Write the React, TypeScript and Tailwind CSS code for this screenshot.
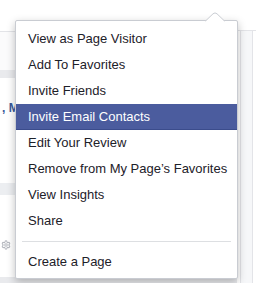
import { Settings } from "lucide-react";

/* ------------------------------------------------------------------ */
/*  Data                                                               */
/* ------------------------------------------------------------------ */

const ITEMS = [
  "View as Page Visitor",
  "Add To Favorites",
  "Invite Friends",
  "Invite Email Contacts",
  "Edit Your Review",
  "Remove from My Page\u2019s Favorites",
  "View Insights",
  "Share",
];

const ACTIVE = "Invite Email Contacts";

/* ------------------------------------------------------------------ */
/*  Component                                                          */
/* ------------------------------------------------------------------ */

export default function App() {
  return (
    <div
      className="relative w-[256px] h-[283px] overflow-hidden bg-white"
      style={{ fontFamily: '"Liberation Sans", Arial, sans-serif' }}
    >
      {/* Page behind the menu */}
      <div className="flex h-full">
        <div className="flex-1 flex flex-col">
          <div className="h-[32px] bg-white border-b border-[#e3e4e8]" />
          <div className="h-[38px] bg-[#fbfbfc]" />
          <div className="h-[8px] bg-[#e9eaed]" />
          <div className="h-[105px] bg-white pt-[17px] pl-[2px]">
            <span className="text-[12px] font-bold text-[#3b5998]">, M</span>
          </div>
          <div className="h-[12px] bg-[#eceef1]" />
          <div className="h-[40px] bg-white" />
          <div className="h-[42px] bg-white pl-[1px] pt-[5px]">
            <Settings className="w-[10px] h-[10px] text-[#b5b8bf]" strokeWidth={2.5} />
          </div>
          <div className="flex-1 bg-[#e9eaed]" />
        </div>
        <div className="w-[19px] flex flex-col">
          <div className="h-[30px] bg-white" />
          <div className="flex-1 flex border-t border-[#e3e4e8]">
            <div className="w-[3px] bg-white" />
            <div className="flex-1 bg-[#f6f7f9] border-l border-r border-[#e3e4e8]" />
            <div className="w-[3px] bg-white" />
          </div>
        </div>
      </div>

      {/* Dropdown menu */}
      <div className="absolute left-[15px] top-[20px] w-[223px] bg-white border border-[#c9ccd2] rounded-[2px] shadow-[0_3px_8px_rgba(0,0,0,0.25)] pt-[5px] pb-[3px]">
        <svg
          className="absolute left-[189px] top-[-9px]"
          width="20"
          height="10"
          viewBox="0 0 20 10"
        >
          <path
            d="M0 9.5 L8 1.8 Q10 0 12 1.8 L20 9.5"
            fill="#fff"
            stroke="#c9ccd2"
            strokeWidth="1"
          />
          <rect x="0" y="9.5" width="20" height="1" fill="#fff" />
        </svg>
        <ul className="flex flex-col">
          {ITEMS.map((item) => {
            const active = item === ACTIVE;
            return (
              <li
                key={item}
                className={`h-[26px] flex items-center pl-[12px] text-[13px] whitespace-nowrap ${
                  active
                    ? "bg-[#4b5c9e] text-white border-b border-[#3b4c8c]"
                    : "text-[#1d2129]"
                }`}
              >
                {item}
              </li>
            );
          })}
        </ul>
        <div className="my-[7px] mx-[6px] h-px bg-[#dddfe2]" />
        <div className="h-[26px] flex items-center pl-[12px] text-[13px] text-[#1d2129]">
          Create a Page
        </div>
      </div>
    </div>
  );
}
